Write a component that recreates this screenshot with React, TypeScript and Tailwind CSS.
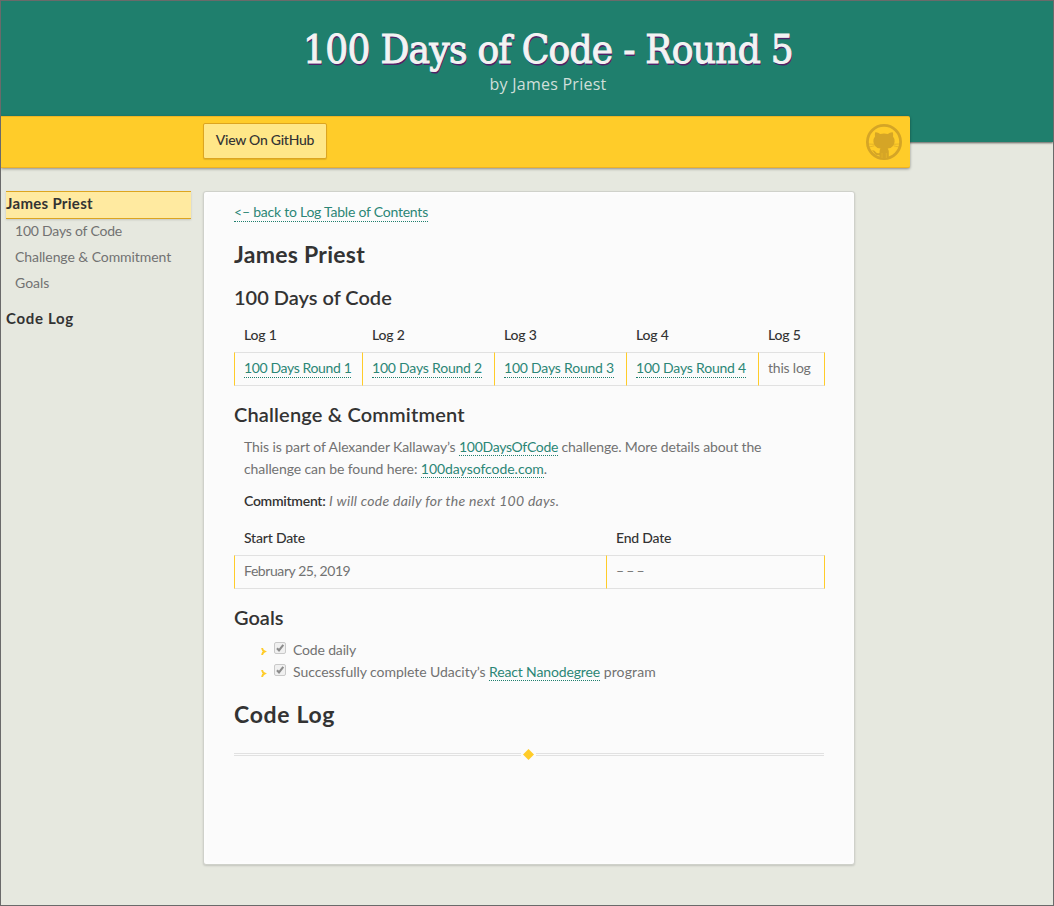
import React from "react";

function Link({ children, className = "" }: { children: React.ReactNode; className?: string }) {
  return (
    <a href="#" className={`border-b border-dotted border-[#1f7f6d] text-[#2b8676] ${className}`}>
      {children}
    </a>
  );
}

function Th({ children, className = "" }: { children: React.ReactNode; className?: string }) {
  return (
    <div className={`flex h-[33px] items-center pb-[2px] pl-[10px] font-medium text-[#333] ${className}`}>
      <span>{children}</span>
    </div>
  );
}

function Td({ children, last = false, className = "" }: { children: React.ReactNode; last?: boolean; className?: string }) {
  return (
    <div
      className={`flex h-[34px] items-center border-y border-l border-y-[#e1e1e1] border-l-[#ffcc29] pb-[2px] pl-[9px] ${last ? "border-r border-r-[#ffcc29]" : ""} ${className}`}
    >
      <span>{children}</span>
    </div>
  );
}

function H1({ children, className = "" }: { children: React.ReactNode; className?: string }) {
  return <h1 className={`h-[30px] text-[23px] leading-[28px] font-bold text-[#333] ${className}`}>{children}</h1>;
}

function H2({ children, className = "" }: { children: React.ReactNode; className?: string }) {
  return <h2 className={`h-[26px] text-[20px] leading-[24px] font-semibold text-[#333] ${className}`}>{children}</h2>;
}

function Goal({ children }: { children: React.ReactNode }) {
  return (
    <li className="flex h-[22px] items-center">
      <svg className="mt-[2px] ml-[26px] size-[7px]" viewBox="0 0 7 7" fill="none" stroke="#ffcc29" strokeWidth="1.9">
        <path d="M2 0Q2.6 2.7 4.5 3.5Q2.6 4.3 2 7" />
      </svg>
      <svg className="mb-[4px] ml-[7px] size-[12px]" viewBox="0 0 12 12" fill="none">
        <rect x=".5" y=".5" width="11" height="11" rx="1.5" fill="#f0f0f0" stroke="#c9c9c9" />
        <path d="M3 6.2L5 8.4L9.3 2.8" stroke="#8c8c8c" strokeWidth="2.1" />
      </svg>
      <span className="ml-[7px] whitespace-pre">{children}</span>
    </li>
  );
}

function Octocat() {
  return (
    <svg className="size-9" viewBox="0 0 36 36" fill="none">
      <circle cx="18" cy="18" r="16.6" stroke="#d5a526" strokeWidth="2.8" />
      <path
        fill="#d5a526"
        d="M9.3 8.2Q11.7 7.9 14.2 9.9Q18 9.1 21.8 9.9Q24.3 7.9 26.7 8.2Q27.6 10.2 27 12.4Q28.8 14.5 28.6 17.4Q28.3 23.7 21.7 24.6Q22.8 25.8 22.8 27.7V34.4Q18 36 13.5 34.4V31.2Q9.5 31.9 8 28.7Q7.3 27.2 6 26.4Q8.3 25.8 9.7 28Q11 29.8 13.5 29.1Q13.4 25.9 14.5 24.6Q7.7 23.8 7.4 17.4Q7.2 14.5 9 12.4Q8.4 10.2 9.3 8.2Z"
      />
      <path
        d="M2.7 20L8 20.3M3 23L8.4 21.8M33.3 20L28 20.3M33 23L27.6 21.8"
        stroke="#d5a526"
        strokeWidth=".6"
      />
      <path d="M16 29V34M20.3 29V34" stroke="#ecb928" strokeWidth=".6" />
    </svg>
  );
}

export default function App() {
  return (
    <div className="h-[906px] w-[1054px] overflow-hidden border border-[#6a6a6a] bg-[#e6e8df] font-['Lato','Noto_Sans',sans-serif] text-[14px] leading-[22px] text-[#727272]">
      <header className="h-[141px] bg-[#1f7f6d] pt-[23px] pr-[145px] pl-[187px] text-center shadow-[0_1px_2px_rgba(0,0,0,0.6)]">
        <h1 className="h-[50px] font-['DejaVu_Serif_Condensed','DejaVu_Serif',serif] text-[40px] leading-[50px] font-normal tracking-[-0.7px] whitespace-nowrap text-[#f3f3f3] [-webkit-text-stroke:1px_#f3f3f3] [text-shadow:1px_2px_0_#4f2368]">
          100 Days of Code - Round 5
        </h1>
        <p className="h-5 font-['Open_Sans',sans-serif] text-[16px] leading-[20px] tracking-[0.25px] text-[#d0dfda]">
          by James Priest
        </p>
      </header>

      <nav className="relative -mt-[26px] flex h-[52px] w-[909px] items-center justify-between rounded-r-[2px] border-t border-b border-[#f0b323] bg-[#ffcc29] pr-2 pl-[202px] shadow-[0_1px_3px_rgba(0,0,0,0.4)]">
        <a
          href="#"
          className="-mt-[2px] flex h-[36px] w-[124px] items-center justify-center rounded-[2px] border border-[#dda51f] bg-[#ffe788] pb-[2px] font-medium tracking-[-0.26px] text-[#333] shadow-[0_1px_1px_rgba(0,0,0,0.12)]"
        >
          View On GitHub
        </a>
        <Octocat />
      </nav>

      <div className="mt-[23px] flex">
        <aside className="w-[202px] pl-[5px]">
          <div className="h-[28px] w-[185px] border-y border-[#dda51f] bg-[#ffeaa0] text-[15px] leading-[22px] font-bold tracking-[0.3px] text-[#333] shadow-[0_1px_2px_rgba(0,0,0,0.15)]">
            James Priest
          </div>
          <ul className="-mt-px pl-[9px] leading-[26px]">
            <li className="tracking-[-0.21px]">100 Days of Code</li>
            <li className="tracking-[-0.08px]">Challenge &amp; Commitment</li>
            <li>Goals</li>
          </ul>
          <div className="mt-[9px] text-[15px] leading-[26px] font-bold tracking-[0.69px] text-[#333]">Code Log</div>
        </aside>

        <main className="h-[674px] w-[652px] rounded-[3px] border border-[#cfd1ca] bg-[#fbfbfb] px-[30px] pt-[9px] shadow-[0_1px_2px_rgba(0,0,0,0.15),inset_0_0_6px_#fff]">
          <p>
            <Link className="pb-px tracking-[-0.23px]">&lt;– back to Log Table of Contents</Link>
          </p>
          <H1 className="mt-[17px] tracking-[0.27px]">James Priest</H1>
          <H2 className="mt-[15px]">100 Days of Code</H2>

          <div className="mt-[8px] grid w-[591px] grid-cols-[128px_132px_132px_132px_67px] tracking-[-0.21px]">
            <Th>Log 1</Th>
            <Th>Log 2</Th>
            <Th>Log 3</Th>
            <Th>Log 4</Th>
            <Th>Log 5</Th>
            <Td><Link className="pb-px tracking-[-0.37px]">100 Days Round 1</Link></Td>
            <Td><Link className="pb-px">100 Days Round 2</Link></Td>
            <Td><Link className="pb-px">100 Days Round 3</Link></Td>
            <Td><Link className="pb-px">100 Days Round 4</Link></Td>
            <Td last>this log</Td>
          </div>

          <H2 className="mt-[16px] tracking-[0.17px]">Challenge &amp; Commitment</H2>
          <p className="mt-[8px] pl-[10px] tracking-[-0.09px] whitespace-nowrap">
            This is part of Alexander Kallaway’s <Link className="tracking-[-0.31px]">100DaysOfCode</Link>
            <span className="tracking-[-0.13px]"> challenge. More details about the</span>
            <br />
            challenge can be found here: <Link className="tracking-[-0.04px]">100daysofcode.com</Link>.
          </p>
          <p className="mt-[10px] pl-[10px]">
            <strong className="font-semibold tracking-[-0.27px] text-[#333]">Commitment:</strong>{" "}
            <em className="tracking-[0.27px]">I will code daily for the next 100 days.</em>
          </p>

          <div className="mt-[10px] grid w-[591px] grid-cols-[372px_219px]">
            <Th className="tracking-[-0.2px]">Start Date</Th>
            <Th className="tracking-[-0.2px]">End Date</Th>
            <Td className="tracking-[-0.42px]">February 25, 2019</Td>
            <Td last className="tracking-[-0.7px]">– – –</Td>
          </div>

          <H2 className="mt-[16px]">Goals</H2>
          <ul className="mt-[8px]">
            <Goal>
              <span className="tracking-[-0.16px]">Code daily</span>
            </Goal>
            <Goal>
              <span className="tracking-[-0.05px]">Successfully complete Udacity’s </span>
              <Link className="tracking-[-0.14px]">React Nanodegree</Link>
              <span className="tracking-[0.13px]"> program</span>
            </Goal>
          </ul>
          <H1 className="mt-[17px] tracking-[0.66px]">Code Log</H1>

          <div className="mt-[19px] flex h-[11px] w-[590px] items-center">
            <div className="h-[3px] w-[287px] border-y border-[#e1e1e1]" />
            <svg className="mx-[2px] h-[11px] w-[11px]" viewBox="0 0 11 11">
              <path d="M5.5 0L11 5.5L5.5 11L0 5.5Z" fill="#ffcc29" />
            </svg>
            <div className="h-[3px] flex-1 border-y border-[#e1e1e1]" />
          </div>
        </main>
      </div>
    </div>
  );
}
